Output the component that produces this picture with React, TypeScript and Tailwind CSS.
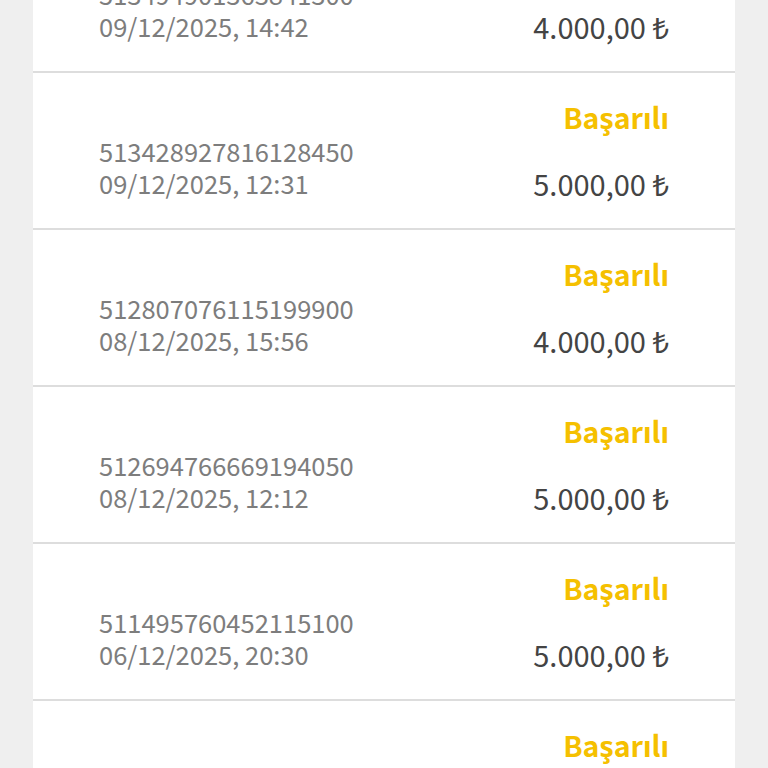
const rows = [
  { id: "513494901363841300", date: "09/12/2025, 14:42", amount: "4.000,00 ₺" },
  { id: "513428927816128450", date: "09/12/2025, 12:31", amount: "5.000,00 ₺" },
  { id: "512807076115199900", date: "08/12/2025, 15:56", amount: "4.000,00 ₺" },
  { id: "512694766669194050", date: "08/12/2025, 12:12", amount: "5.000,00 ₺" },
  { id: "511495760452115100", date: "06/12/2025, 20:30", amount: "5.000,00 ₺" },
  { id: "511384907725601400", date: "06/12/2025, 18:05", amount: "5.000,00 ₺" },
];

const TransactionRow = ({ row }: { row: (typeof rows)[number] }) => {
  return (
    <div className="h-[157px] border-b-2 border-[#dddddd] px-[66px] pt-[26px] pb-[29px] flex justify-between">
      <div className="flex flex-col justify-end text-[25.5px] leading-[32px] text-[#7d7d7d]">
        <span>{row.id}</span>
        <span>{row.date}</span>
      </div>
      <div className="flex flex-col justify-between items-end">
        <span className="text-[28.5px] leading-[36px] font-bold text-[#f5c000]">Başarılı</span>
        <span className="text-[29px] leading-[32px] text-[#444444]">{row.amount}</span>
      </div>
    </div>
  );
};

export default function App() {
  return (
    <div
      className="h-[768px] overflow-hidden bg-[#efefef] px-[33px]"
      style={{ fontFamily: '"Noto Sans CJK SC", "Noto Sans", sans-serif' }}
    >
      <div className="-mt-[84px] bg-white">
        {rows.map((row) => (
          <TransactionRow key={row.id} row={row} />
        ))}
      </div>
    </div>
  );
}
